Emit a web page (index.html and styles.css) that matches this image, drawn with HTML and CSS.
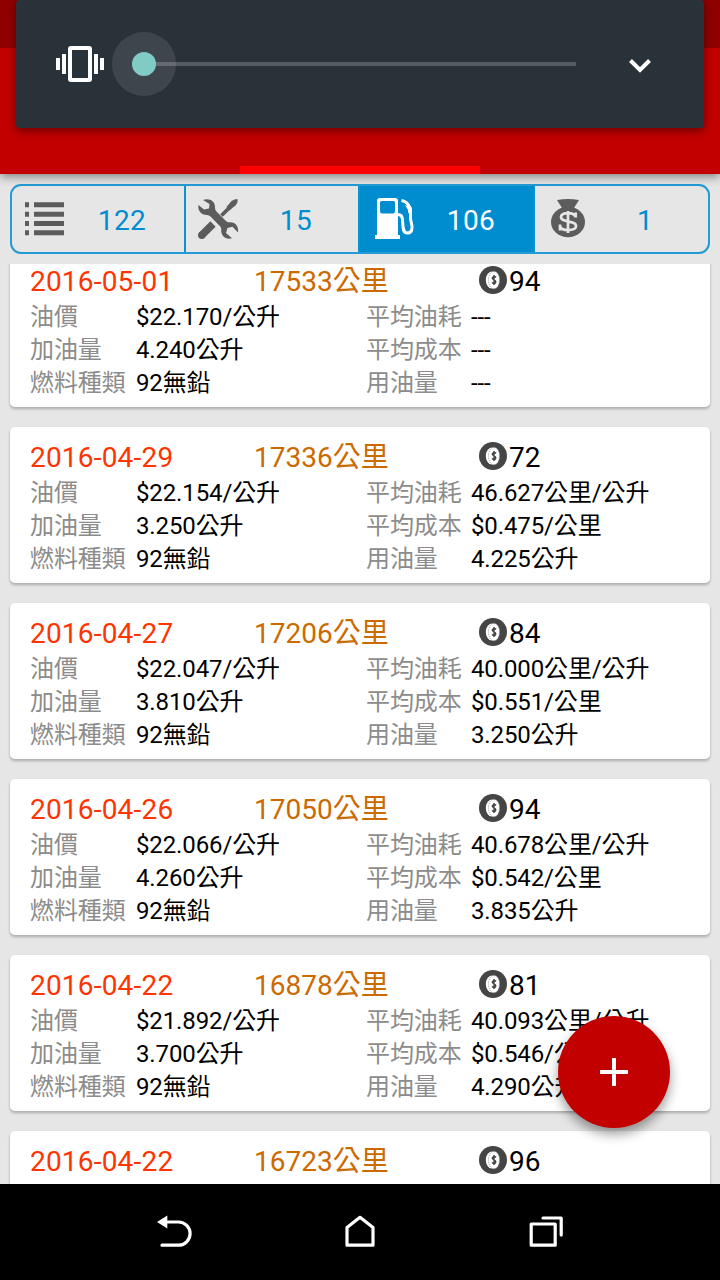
FILE: index.html
```html
<!DOCTYPE html>
<html lang="zh-Hant">
<head>
<meta charset="utf-8">
<title>油耗紀錄</title>
<link rel="stylesheet" href="styles.css">
</head>
<body>
<svg class="defs" aria-hidden="true">
  <symbol id="coin" viewBox="0 0 30 30">
    <circle cx="15" cy="15" r="14" fill="#454545"/>
    <ellipse cx="13.800" cy="15" rx="6" ry="8.600" fill="#fff"/>
    <ellipse cx="16" cy="15" rx="5.600" ry="8.800" fill="#fff" stroke="#777" stroke-width=".8" stroke-dasharray="1 1.2"/>
    <path d="M18 12.400c-1-1.200-3.700-1.100-3.700.7 0 2 3.500 1.600 3.500 3.800 0 1.900-2.700 2-3.800.7M16 10v10" fill="none" stroke="#454545" stroke-width="1.500"/>
  </symbol>
</svg>
<div class="screen">
  <header class="appbar">
    <div class="status"></div>
    <div class="indicator"></div>
    <div class="volume">
      <svg class="vibrate" viewBox="0 0 48 40"><path d="M0 14h4v12H0zM6 10h4v20H6zM38 10h4v20h-4zM44 14h4v12h-4z" fill="#fff"/><rect x="14" y="4" width="20" height="32" rx="1" fill="none" stroke="#fff" stroke-width="4"/></svg>
      <div class="slider"><span class="track"></span><span class="halo"></span><span class="thumb"></span></div>
      <svg class="chevron" viewBox="0 0 24 16"><path d="M2.500 2.500 12 12l9.500-9.500" fill="none" stroke="#fff" stroke-width="4"/></svg>
    </div>
  </header>

  <nav class="tabs">
    <div class="tab"><svg viewBox="0 0 44 44"><path d="M3 5.300h4v5H3zM12 5.300h30v5H12zM3 14.700h4v5H3zM12 14.700h30v5H12zM3 24h4v5H3zM12 24h30v5H12zM3 33.300h4v5H3zM12 33.300h30v5H12z" fill="#5c5c5c"/></svg><span>122</span></div>
    <div class="tab"><svg viewBox="0 0 44 44"><g fill="none" stroke="#5c5c5c"><path d="M5.800 38.200 17 27" stroke-width="7.500"/><path d="M25.500 18.500 34 10" stroke-width="3.800"/></g><g fill="#5c5c5c"><circle cx="5.800" cy="38.200" r="3.750"/><path d="M30.500 10 35.500 4q3-2 6-2 .8 3-2 6.500L33 13.800z"/><path d="M7 3c6-2.500 12.500 1 12 8q0 2 1.500 3.500L30 24q1.500 1.500 3.500 1.200c6-.5 9.500 4.500 8.500 10.300l-5.500-5.700-5 1.200-1.500 5 6 5.300c-6 1.500-11.500-2-10.700-8.700q0-2.200-1.500-3.600L14.500 19.500Q13 18 11 18C5 18 1.500 13.500 2.500 8l5.500 4.500 5-1 .5-4.500z"/></g></svg><span>15</span></div>
    <div class="tab active"><svg viewBox="0 0 44 44"><path fill="#fff" fill-rule="evenodd" d="M6 1h15q3 0 3 3v34h2v4H1v-4h2V4q0-3 3-3zm1.500 3Q6 4 6 5.500V14q0 2.500 2 2.500h11q2 0 2-2.500V5.500Q21 4 19.500 4z"/><path d="M24 17.500q4 0 4.500 5c.5 7 0 13.500 4.500 13.500 5 0 6-4 4.500-9.500Q36 22 36.500 17.500v-6Q33.500 4.500 27.500 3.500" fill="none" stroke="#fff" stroke-width="3"/><path d="M31 8 36 10l1 8-3-2.500V13z" fill="#fff"/></svg><span>106</span></div>
    <div class="tab"><svg viewBox="0 0 44 44"><path d="M10 3q11-1.800 22 0l-6 9.500H16z" fill="#5c5c5c"/><ellipse cx="21" cy="25" rx="17" ry="15.300" fill="#5c5c5c"/><path d="M28.500 20c-1-5-14.500-5.500-14.500 0 0 6 15 3 15 9 0 5.500-15 5.500-16 0M21 14v22M28.700 15.500v5M13 27.500v6" fill="none" stroke="#e6e6e6" stroke-width="2.700"/></svg><span>1</span></div>
  </nav>

  <main class="list">
    <article class="card">
      <div class="head"><span class="date">2016-05-01</span><span class="km">17533公里</span><span class="cost"><svg><use href="#coin"/></svg>94</span></div>
      <div class="grid"><label>油價</label><b>$22.170/公升</b><label>平均油耗</label><b>---</b><label>加油量</label><b>4.240公升</b><label>平均成本</label><b>---</b><label>燃料種類</label><b>92無鉛</b><label>用油量</label><b>---</b></div>
    </article>
    <article class="card">
      <div class="head"><span class="date">2016-04-29</span><span class="km">17336公里</span><span class="cost"><svg><use href="#coin"/></svg>72</span></div>
      <div class="grid"><label>油價</label><b>$22.154/公升</b><label>平均油耗</label><b>46.627公里/公升</b><label>加油量</label><b>3.250公升</b><label>平均成本</label><b>$0.475/公里</b><label>燃料種類</label><b>92無鉛</b><label>用油量</label><b>4.225公升</b></div>
    </article>
    <article class="card">
      <div class="head"><span class="date">2016-04-27</span><span class="km">17206公里</span><span class="cost"><svg><use href="#coin"/></svg>84</span></div>
      <div class="grid"><label>油價</label><b>$22.047/公升</b><label>平均油耗</label><b>40.000公里/公升</b><label>加油量</label><b>3.810公升</b><label>平均成本</label><b>$0.551/公里</b><label>燃料種類</label><b>92無鉛</b><label>用油量</label><b>3.250公升</b></div>
    </article>
    <article class="card">
      <div class="head"><span class="date">2016-04-26</span><span class="km">17050公里</span><span class="cost"><svg><use href="#coin"/></svg>94</span></div>
      <div class="grid"><label>油價</label><b>$22.066/公升</b><label>平均油耗</label><b>40.678公里/公升</b><label>加油量</label><b>4.260公升</b><label>平均成本</label><b>$0.542/公里</b><label>燃料種類</label><b>92無鉛</b><label>用油量</label><b>3.835公升</b></div>
    </article>
    <article class="card">
      <div class="head"><span class="date">2016-04-22</span><span class="km">16878公里</span><span class="cost"><svg><use href="#coin"/></svg>81</span></div>
      <div class="grid"><label>油價</label><b>$21.892/公升</b><label>平均油耗</label><b>40.093公里/公升</b><label>加油量</label><b>3.700公升</b><label>平均成本</label><b>$0.546/公里</b><label>燃料種類</label><b>92無鉛</b><label>用油量</label><b>4.290公升</b></div>
    </article>
    <article class="card">
      <div class="head"><span class="date">2016-04-22</span><span class="km">16723公里</span><span class="cost"><svg><use href="#coin"/></svg>96</span></div>
    </article>
  </main>

  <div class="fab"><svg viewBox="0 0 28 28"><path d="M14 0v28M0 14h28" stroke="#fff" stroke-width="4"/></svg></div>

  <footer class="navbar">
    <svg viewBox="0 0 40 40"><path d="M9 13h13.500a11.600 11.600 0 0 1 0 23.200H6" fill="none" stroke="#fff" stroke-width="3.200" stroke-linecap="round"/><path d="M1 13 11.300 6.500v13z" fill="#fff"/></svg>
    <svg viewBox="0 0 40 40"><path d="M7 18.500 20 8.300l13 10.200v17.700H7z" fill="none" stroke="#fff" stroke-width="3.200" stroke-linejoin="round"/></svg>
    <svg viewBox="0 0 40 40"><path d="M5.200 15h24v21.200h-24zM17 9h18.200v17" fill="none" stroke="#fff" stroke-width="3.200" stroke-linecap="round" stroke-linejoin="round"/></svg>
  </footer>
</div>
</body>
</html>
```
FILE: styles.css
```css
* { box-sizing: border-box; }
body { margin: 0; background: #e6e6e6; font-family: Roboto, "Noto Sans CJK TC", sans-serif; }
svg { display: block; flex: none; }
.defs { position: absolute; width: 0; height: 0; }
.screen { position: relative; width: 720px; height: 1280px; overflow: hidden; display: flex; flex-direction: column; }

.appbar { position: relative; flex: none; height: 174px; background: #c20000; box-shadow: 0 2px 10px rgba(0,0,0,.5); display: flex; flex-direction: column; justify-content: space-between; }
.status { height: 48px; background: #8f0000; }
.indicator { width: 240px; height: 8px; margin-left: 240px; background: #f00; }
.volume { position: absolute; left: 16px; top: 0; width: 688px; height: 128px; padding: 0 52px 0 40px; border-radius: 4px; background: #283238; box-shadow: 0 3px 9px rgba(0,0,0,.45); display: flex; align-items: center; }
.vibrate { width: 48px; height: 40px; }
.slider { position: relative; width: 432px; height: 64px; margin-left: 40px; display: flex; align-items: center; }
.track { width: 100%; height: 4px; background: #535c61; }
.halo { position: absolute; left: -32px; top: 0; width: 64px; height: 64px; border-radius: 50%; background: rgba(255,255,255,.1); }
.thumb { position: absolute; left: -12px; top: 20px; width: 24px; height: 24px; border-radius: 50%; background: #80cbc4; }
.chevron { width: 24px; height: 16px; margin: 4px 0 0 auto; }

.tabs { flex: none; height: 70px; margin: 10px 10px 0; border: 2px solid #239bd5; border-radius: 11px; display: flex; overflow: hidden; }
.tab { width: 174px; padding-left: 10px; display: flex; align-items: center; color: #008dd0; font-size: 28px; border-right: 2px solid #0b92d1; }
.tab:first-child span { padding-right: 6px; }
.tab:nth-child(2) span { padding-right: 6px; }
.tab:nth-child(3) { width: 175px; padding-left: 14px; }
.tab:last-child { flex: 1; border: 0; padding-left: 12px; }
.tab svg { width: 44px; height: 44px; }
.tab span { flex: 1; text-align: center; padding: 2px 9px 0 0; letter-spacing: .4px; }
.tab.active { background: #008dd0; color: #fff; }

.list { height: 920px; flex: none; margin-top: 10px; padding: 0 10px; overflow: hidden; display: flex; flex-direction: column; gap: 20px; }
.card { flex: none; height: 156px; padding: 12px 20px 7px; background: #fff; border-radius: 5px; box-shadow: 0 2px 3px rgba(0,0,0,.26); }
.card:first-child { margin-top: -13px; }
.head { display: grid; grid-template-columns: 224px 224px 1fr; height: 38px; line-height: 37px; font-size: 28px; white-space: nowrap; }
.date { color: #ff3400; letter-spacing: .2px; }
.km { color: #cc6a00; }
.cost { display: flex; align-items: center; height: 37px; }
.cost svg { width: 30px; height: 30px; margin: -3px 1px 0 0; }
.grid { display: grid; grid-template-columns: 106px 230px 105px 1fr; grid-auto-rows: 33px; line-height: 33px; font-size: 24px; letter-spacing: -.12px; white-space: nowrap; }
.grid label { color: #8c8c8c; }
.grid b { color: #000; font-weight: 400; }

.fab { position: absolute; left: 558px; top: 1016px; width: 112px; height: 112px; border-radius: 50%; background: #c20000; box-shadow: 0 6px 12px rgba(0,0,0,.4); display: flex; align-items: center; justify-content: center; }
.fab svg { width: 28px; height: 28px; }
.navbar { position: relative; flex: none; height: 96px; background: #000; display: flex; align-items: center; padding: 0 154px 0 156px; justify-content: space-between; }
.navbar svg { width: 40px; height: 40px; margin-top: -6px; }
.navbar svg:nth-child(2) { margin-left: -2px; }
```
